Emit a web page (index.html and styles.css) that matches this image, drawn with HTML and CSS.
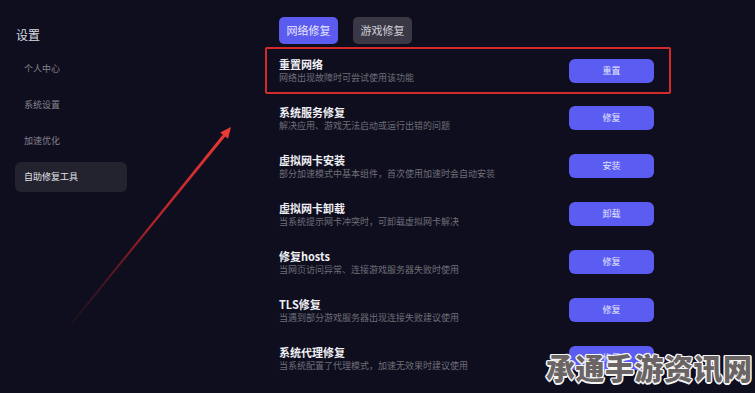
FILE: index.html
```html
<!DOCTYPE html>
<html lang="zh-CN">
<head>
<meta charset="utf-8">
<title>设置</title>
<link rel="stylesheet" href="styles.css">
</head>
<body>
<aside class="sidebar">
  <div class="heading">设置</div>
  <nav class="menu">
    <div class="menu-item">个人中心</div>
    <div class="menu-item">系统设置</div>
    <div class="menu-item">加速优化</div>
    <div class="menu-item active">自助修复工具</div>
  </nav>
</aside>
<main class="main">
  <div class="tabs">
    <div class="tab active">网络修复</div>
    <div class="tab">游戏修复</div>
  </div>
  <div class="list">
    <div class="row highlighted">
      <div class="info"><div class="title">重置网络</div><div class="desc">网络出现故障时可尝试使用该功能</div></div>
      <div class="btn">重置</div>
    </div>
    <div class="row">
      <div class="info"><div class="title">系统服务修复</div><div class="desc">解决应用、游戏无法启动或运行出错的问题</div></div>
      <div class="btn">修复</div>
    </div>
    <div class="row">
      <div class="info"><div class="title">虚拟网卡安装</div><div class="desc">部分加速模式中基本组件，首次使用加速时会自动安装</div></div>
      <div class="btn">安装</div>
    </div>
    <div class="row">
      <div class="info"><div class="title">虚拟网卡卸载</div><div class="desc">当系统提示网卡冲突时，可卸载虚拟网卡解决</div></div>
      <div class="btn">卸载</div>
    </div>
    <div class="row">
      <div class="info"><div class="title">修复hosts</div><div class="desc">当网页访问异常、连接游戏服务器失败时使用</div></div>
      <div class="btn">修复</div>
    </div>
    <div class="row">
      <div class="info"><div class="title">TLS修复</div><div class="desc">当遇到部分游戏服务器出现连接失败建议使用</div></div>
      <div class="btn">修复</div>
    </div>
    <div class="row">
      <div class="info"><div class="title">系统代理修复</div><div class="desc">当系统配置了代理模式，加速无效果时建议使用</div></div>
      <div class="btn">修复</div>
    </div>
  </div>
</main>
<svg class="arrow" width="755" height="393" viewBox="0 0 755 393" aria-hidden="true">
  <defs>
    <linearGradient id="ag" x1="72" y1="323" x2="231" y2="127" gradientUnits="userSpaceOnUse">
      <stop offset="0" stop-color="#5a1420" stop-opacity="0.3"/>
      <stop offset="0.5" stop-color="#b02227"/>
      <stop offset="1" stop-color="#ec3a35"/>
    </linearGradient>
  </defs>
  <polygon points="71.5,322.6 72.5,323.4 225.3,136.5 222.9,134.5" fill="url(#ag)"/>
  <polygon points="231,127 220.2,132.4 228,138.7" fill="#ec3a35"/>
</svg>
<div class="watermark">承通手游资讯网</div>
</body>
</html>
```
FILE: styles.css
```css
html, body {
  margin: 0;
  padding: 0;
}
body {
  width: 755px;
  height: 393px;
  overflow: hidden;
  background: #0f0e1e;
  display: flex;
  font-family: "Noto Sans CJK SC", "Noto Sans", sans-serif;
  position: relative;
}
.sidebar {
  width: 140px;
  flex: none;
  padding-top: 28px;
}
.heading {
  font-size: 12px;
  line-height: 14px;
  color: #dcdce2;
  padding-left: 16px;
}
.menu {
  margin-top: 12px;
  display: flex;
  flex-direction: column;
  gap: 6px;
  padding-left: 15px;
}
.menu-item {
  width: 112px;
  height: 30px;
  line-height: 30px;
  box-sizing: border-box;
  padding-left: 9px;
  font-size: 9px;
  color: #83838c;
  border-radius: 6px;
}
.menu-item.active {
  background: #23222f;
  color: #e2e2e8;
}
.main {
  flex: 1;
  padding-left: 125px;
  padding-top: 17px;
}
.tabs {
  display: flex;
  gap: 15px;
  padding-left: 14px;
}
.tab {
  width: 59px;
  height: 27px;
  line-height: 27px;
  text-align: center;
  font-size: 11px;
  border-radius: 5px;
  background: #393844;
  color: #d0d0d8;
}
.tab.active {
  background: #5b5bf0;
  color: #e8e8ff;
}
.list {
  margin-top: 3px;
  width: 406px;
}
.row {
  height: 48px;
  display: flex;
  align-items: center;
  justify-content: space-between;
  padding: 0 17px 0 14px;
  box-sizing: border-box;
}
.row.highlighted {
  height: 47px;
  box-shadow: inset 0 0 0 2px #d22a2b;
  border-radius: 2px;
}
.title {
  font-size: 11px;
  line-height: 14px;
  font-weight: 700;
  color: #f0f0f4;
}
.desc {
  font-size: 9px;
  line-height: 13px;
  color: #6e6e78;
}
.btn {
  width: 85px;
  height: 24px;
  line-height: 24px;
  text-align: center;
  border-radius: 6px;
  background: #5b5cf2;
  color: #e4e4ff;
  font-size: 9px;
}
.arrow {
  position: absolute;
  left: 0;
  top: 0;
  pointer-events: none;
}
.watermark {
  position: absolute;
  left: 546px;
  top: 349px;
  font-size: 29px;
  line-height: 36px;
  font-weight: 900;
  letter-spacing: 0.5px;
  color: #6a6464;
  text-shadow:
    1.5px 0 0 #f4f4f4, -1.5px 0 0 #f4f4f4, 0 1.5px 0 #f4f4f4, 0 -1.5px 0 #f4f4f4,
    1px 1px 0 #f4f4f4, -1px -1px 0 #f4f4f4, 1px -1px 0 #f4f4f4, -1px 1px 0 #f4f4f4;
}
```
